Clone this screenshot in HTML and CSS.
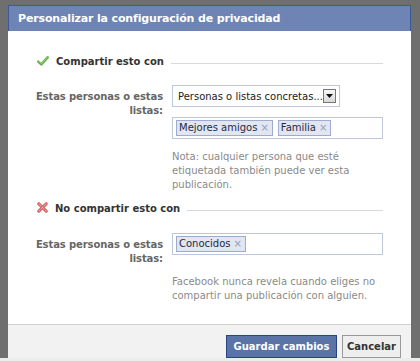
FILE: index.html
```html
<!DOCTYPE html>
<html lang="es">
<head>
<meta charset="utf-8">
<title>Personalizar la configuración de privacidad</title>
<link rel="stylesheet" href="styles.css">
</head>
<body>
<div class="frame">
  <div class="dialog">
    <div class="title">Personalizar la configuración de privacidad</div>
    <div class="body">
      <div class="section-head">
        <svg class="icon" width="12" height="10" viewBox="0 0 12 10"><path d="M1.3 5.6 L4.3 8.4 L10.6 1.4" fill="none" stroke="#5fae45" stroke-width="2.6" stroke-linecap="round" stroke-linejoin="round"/><path d="M1.6 5.2 L4.3 7.6 L10.3 1.2" fill="none" stroke="#a8dc8e" stroke-width="0.9" stroke-linecap="round" stroke-linejoin="round"/></svg>
        <span class="head-text">Compartir esto con</span>
        <span class="rule"></span>
      </div>
      <div class="row first">
        <div class="label">Estas personas o estas listas:</div>
        <div class="fields">
          <div class="select">
            <span class="select-text">Personas o listas concretas...</span>
            <span class="arrow"><svg width="7" height="4" viewBox="0 0 7 4"><path d="M0 0 H7 L3.5 4 Z" fill="#111"/></svg></span>
          </div>
          <div class="tokenizer">
            <span class="token">Mejores amigos<span class="x">×</span></span>
            <span class="token">Familia<span class="x">×</span></span>
          </div>
          <p class="note">Nota: cualquier persona que esté etiquetada también puede ver esta publicación.</p>
        </div>
      </div>
      <div class="section-head second">
        <svg class="icon" width="11" height="11" viewBox="0 0 11 11"><path d="M1.8 1.8 L9.2 9.2 M9.2 1.8 L1.8 9.2" fill="none" stroke="#d76c6c" stroke-width="3.2" stroke-linecap="round"/><path d="M1.8 1.8 L9.2 9.2 M9.2 1.8 L1.8 9.2" fill="none" stroke="#f5c0c0" stroke-width="1" stroke-dasharray="1 1.2"/></svg>
        <span class="head-text">No compartir esto con</span>
        <span class="rule"></span>
      </div>
      <div class="row second">
        <div class="label">Estas personas o estas listas:</div>
        <div class="fields">
          <div class="tokenizer">
            <span class="token">Conocidos<span class="x">×</span></span>
          </div>
          <p class="note">Facebook nunca revela cuando eliges no compartir una publicación con alguien.</p>
        </div>
      </div>
    </div>
    <div class="footer">
      <button class="btn primary">Guardar cambios</button>
      <button class="btn">Cancelar</button>
    </div>
  </div>
</div>
</body>
</html>
```
FILE: styles.css
```css
* { box-sizing: border-box; }
html, body { margin: 0; padding: 0; }
body {
  background: #ececec;
  font-family: "DejaVu Sans", Verdana, sans-serif;
  font-size: 10px;
  color: #333;
}
.frame {
  background: #6f6f6f;
  padding: 5px 9px 0 8px;
  height: 358px;
  width: 420px;
}
.dialog {
  background: #fff;
  height: 353px;
  display: flex;
  flex-direction: column;
}
.title {
  background: #6d84b4;
  border: 1px solid #3b5998;
  border-bottom: none;
  height: 26px;
  color: #fff;
  font-weight: bold;
  font-size: 11px;
  letter-spacing: -0.15px;
  line-height: 25px;
  padding-left: 9px;
}
.body {
  flex: 1;
  padding: 24px 28px 0 29px;
}
.section-head {
  display: flex;
  align-items: center;
  height: 14px;
}
.section-head.second { margin-top: 10px; }
.icon { flex: none; margin-right: 7px; margin-top: -3px; }
.head-text {
  font-weight: bold;
  color: #333;
  margin-right: 7px;
  line-height: 14px;
}
.rule {
  flex: 1;
  height: 1px;
  background: #d9d9d9;
  margin-top: 2px;
}
.row {
  display: grid;
  grid-template-columns: 136px 1fr;
  column-gap: 9px;
  margin: 16px 0 0 -10px;
}
.row.second { margin-top: 17px; }
.label {
  text-align: right;
  color: #666;
  font-weight: bold;
  line-height: 14px;
  padding-top: 5px;
  letter-spacing: -0.1px;
}
.fields { display: flex; flex-direction: column; align-items: flex-start; }
.select {
  display: flex;
  align-items: center;
  height: 22px;
  border: 1px solid #bdc7d8;
  padding: 0 3px 0 5px;
  width: 168px;
  color: #222;
}
.select-text { flex: 1; white-space: nowrap; }
.arrow {
  width: 13px;
  height: 14px;
  border: 1px solid #777;
  background: linear-gradient(#f7f7f7, #d8d8d8);
  display: flex;
  align-items: center;
  justify-content: center;
}
.tokenizer {
  margin-top: 10px;
  width: 211px;
  height: 22px;
  border: 1px solid #bdc7d8;
  padding: 2px 3px;
  display: flex;
  gap: 5px;
}
.row.second .tokenizer { margin-top: 0; }
.token {
  background: #e2e6f0;
  border: 1px solid #9dacce;
  color: #1c2a47;
  height: 16px;
  line-height: 14px;
  padding: 0 3px 0 2px;
  white-space: nowrap;
}
.x { color: #8f9fc2; margin-left: 3px; }
.note {
  margin: 11px 0 0;
  color: #8a8a8a;
  line-height: 14px;
  width: 210px;
}
.row.second .note { margin-top: 20px; }
.footer {
  height: 34px;
  background: #f2f2f2;
  border-top: 1px solid #cfcfcf;
  display: flex;
  justify-content: flex-end;
  align-items: flex-end;
  gap: 5px;
  padding: 0 10px 0 0;
}
.btn {
  font-family: inherit;
  font-size: 10px;
  font-weight: bold;
  height: 23px;
  padding: 0 4px;
  border: 1px solid #999;
  background: #eee;
  color: #333;
  margin: 0;
}
.btn.primary {
  background: #5b74a8;
  border-color: #29447e;
  color: #fff;
  width: 111px;
}
```
